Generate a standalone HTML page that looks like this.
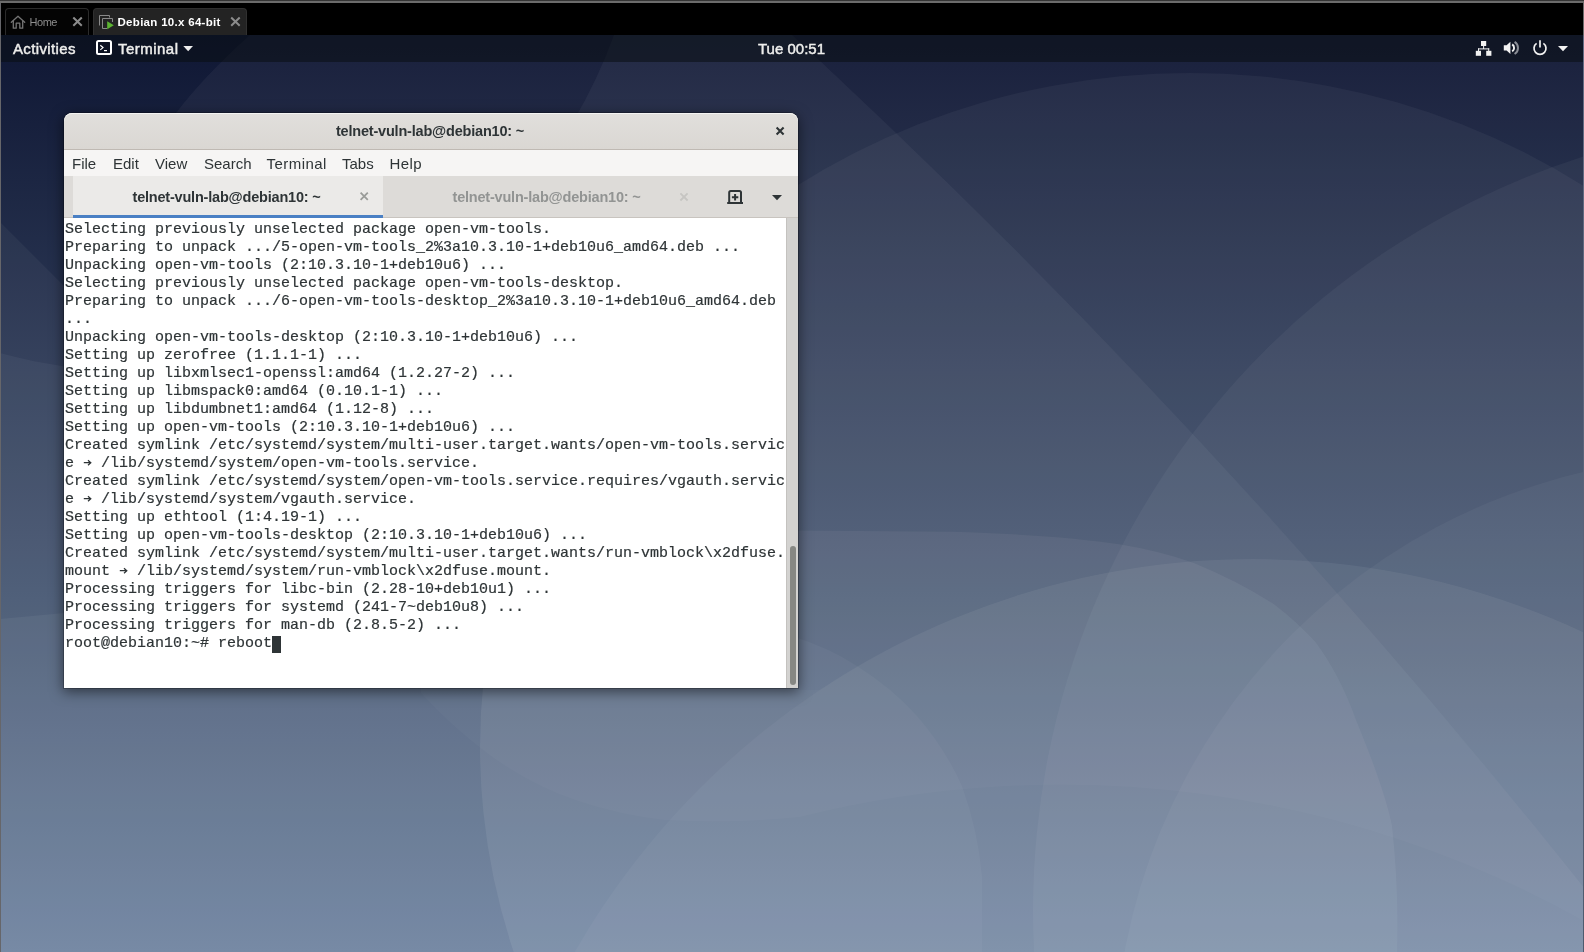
<!DOCTYPE html>
<html>
<head>
<meta charset="utf-8">
<title>Debian 10.x 64-bit</title>
<style>
*{box-sizing:border-box;margin:0;padding:0}
html,body{width:1584px;height:952px;overflow:hidden;background:#1c2541;font-family:"Liberation Sans",sans-serif}
#root{position:absolute;left:0;top:0;width:1584px;height:952px;overflow:hidden;will-change:transform}
#wall{position:absolute;left:0;top:0;width:1584px;height:952px}
/* vmware chrome */
#vmtop{position:absolute;left:0;top:0;width:1584px;height:35px;background:#000}
#vmline{position:absolute;left:0;top:0;width:1584px;height:3px;background:linear-gradient(#343434 0,#343434 30%,#6b6b6b 36%,#6b6b6b 92%,#333 100%)}
#vmleft{position:absolute;left:0;top:3px;width:1px;height:949px;background:#66666a}
#vmright{position:absolute;right:0;top:3px;width:1px;height:949px;background:linear-gradient(#6c6c6c 0,#6c6c6c 32px,#656d84 33px,#4d5a6e 100%)}
.vtab{position:absolute;top:8px;height:27px;border:1px solid #2b2b2b;border-bottom:none;border-radius:4px 4px 0 0;font-size:11px}
#vt1{left:5px;width:84px;background:#040404;color:#8e8e8e}
#vt2{left:93px;width:154px;background:#232323;color:#fff;font-weight:bold;border-color:#303030}
.vtab span{position:absolute;white-space:nowrap}
/* gnome bar */
#gbar{position:absolute;left:1px;top:35px;width:1582px;height:27px;background:rgba(10,14,18,.55);color:#eeeeec;font-weight:normal;-webkit-text-stroke:.45px #eeeeec;font-size:15px}
#gbar span{position:absolute;white-space:nowrap;line-height:27px;top:0}
#gbar>*{transform:translateX(1px)}
/* terminal window */
#win{position:absolute;left:64px;top:113px;width:734px;height:575px;border-radius:8px 8px 0 0;background:#fff;box-shadow:0 3px 13px 1px rgba(0,0,0,.5),0 0 0 1px rgba(0,0,0,.22);overflow:hidden}
#tbar{position:absolute;left:0;top:0;width:734px;height:37px;background:linear-gradient(#e1dfdc,#dad7d3);border-bottom:1px solid #bfb9b3;border-radius:8px 8px 0 0;box-shadow:inset 0 1px 0 #f4f4f2}
#tbar .t{position:absolute;left:-1px;width:734px;text-align:center;top:0;line-height:36px;font-weight:bold;font-size:14.5px;letter-spacing:-.2px;color:#2e3436}
#mbar{position:absolute;left:0;top:37px;width:734px;height:26px;background:#f6f5f4;font-size:15px;color:#2e3436}
#mbar span{position:absolute;top:0;line-height:27px;white-space:nowrap}
#tabs{position:absolute;left:0;top:63px;width:734px;height:42px;background:#dddbd8;border-bottom:1px solid #c8c4bf}
#tab1{position:absolute;left:9px;top:0;width:310px;height:42px;background:#ebeae8;border-bottom:3px solid #4a80c4}
#tabs .l{position:absolute;top:2px;line-height:39px;font-weight:bold;font-size:14.5px;letter-spacing:-.2px;white-space:nowrap}
#term{position:absolute;left:0;top:105px;width:722px;height:470px;background:#fff;color:#2e3436;font-family:"Liberation Mono",monospace;font-size:15px;line-height:18px;white-space:pre;padding:3px 0 0 1px;-webkit-text-stroke:.2px #2e3436}
#sb{position:absolute;left:722px;top:105px;width:12px;height:470px;background:#d3d2d0;border-left:1px solid #c4c2bf}
#sbt{position:absolute;left:3px;top:328px;width:6px;height:139px;border-radius:3px;background:#868783}
#cur{display:inline-block;width:9px;height:17px;background:#2e3436;vertical-align:top;margin-top:1px}
</style>
</head>
<body>
<div id="root">
<svg id="wall" width="1584" height="952" viewBox="0 0 1584 952">
<defs>
<linearGradient id="bg" x1="0" y1="0" x2="0" y2="952" gradientUnits="userSpaceOnUse">
<stop offset="0" stop-color="#0c1330"/>
<stop offset=".63" stop-color="#41526e"/>
<stop offset="1" stop-color="#647a99"/>
</linearGradient>
<clipPath id="cB"><ellipse cx="1190" cy="747" rx="710" ry="674"/></clipPath>
<clipPath id="cG"><path d="M400,600 L792,600 L792,636 Q830,648 857,666 Q892,688 917,716 Q945,748 962,786 Q978,830 982,876 L982,952 L400,952Z"/></clipPath>
<clipPath id="cH"><circle cx="1253" cy="1341" r="782"/><path d="M400,600 L798,600 L798,690 L850,690 L850,952 L400,952Z"/></clipPath>
</defs>
<rect width="1584" height="952" fill="url(#bg)"/>
<g fill="#fff">
<!-- level 0: everything except dark top-left corner -->
<path fill-rule="evenodd" fill-opacity=".045" d="M0,0H1584V952H0Z M0,0 L0,222 L64,286 Q110,200 176,113 Q205,75 250,35 L290,0Z"/>
<!-- A petal: big circle A minus Dk2 -->
<path fill-rule="evenodd" fill-opacity=".045" d="M-12114,5680a7686,7686 0 1,0 15372,0a7686,7686 0 1,0 -15372,0Z M-377,-140a511,511 0 1,0 1022,0a511,511 0 1,0 -1022,0Z"/>
<!-- S3/E -->
<path fill-opacity=".05" d="M0,619 L64,613 L798,530.5 L952,531.7 Q1060,535 1121,544.6 Q1160,551 1194,563 Q1240,582 1275,605 Q1297,622 1315,641.6 Q1340,675 1356,720 Q1385,790 1392,826 Q1399,890 1397,952 L0,952Z"/>
<ellipse cx="1190" cy="747" rx="710" ry="674" fill-opacity=".045"/>
<circle cx="1824" cy="910" r="791" fill-opacity=".045"/>
<circle cx="1722" cy="1064" r="608" fill-opacity=".04"/>
<circle cx="1253" cy="1341" r="782" fill-opacity=".04"/>
<g clip-path="url(#cB)"><rect x="400" y="600" width="600" height="352" fill-opacity=".035" clip-path="url(#cG)"/></g>
<!-- L -->
<path fill-opacity=".025" clip-path="url(#cH)" d="M421,693 Q450,725 487,753 Q530,785 578,801 Q620,815 664,820 Q730,824 800,817 A1072,1072 0 0,1 1584,921 L1584,500 L421,500Z"/>
</g>
</svg>

<div id="vmtop"></div>
<div id="vmline"></div>
<div id="vmleft"></div>
<div id="vmright"></div>
<div class="vtab" id="vt1"><span style="left:23.5px;top:7px;letter-spacing:-.45px">Home</span></div>
<div class="vtab" id="vt2"><span style="left:23.5px;top:7px;font-size:11.5px;letter-spacing:.3px">Debian 10.x 64-bit</span></div>
<svg style="position:absolute;left:0;top:0" width="260" height="36" viewBox="0 0 260 36">
<g fill="none" stroke="#757575" stroke-width="1.3" stroke-linejoin="round" stroke-linecap="round">
<path d="M11.3,22.3 L18,16.3 L24.7,22.3"/>
<path d="M13.3,21 V28.2 H16.2 V23.2 H19.8 V28.2 H22.7 V21"/>
</g>
<g stroke="#8c8c8c" stroke-width="2" stroke-linecap="butt">
<path d="M73.3,17.5 L81.8,25.8 M81.8,17.5 L73.3,25.8"/>
<path d="M231.2,17.5 L239.7,25.8 M239.7,17.5 L231.2,25.8"/>
</g>
<g fill="none" stroke="#8a8a8a" stroke-width="1">
<path d="M99.5,25.5 V15.5 H109.5 V17.5"/>
<path d="M107,28.5 H102.5 V18.5 H112.5 V22"/>
</g>
<path d="M107.2,21.3 L113.8,25.3 L107.2,29.3Z" fill="#5cb531"/>
</svg>

<div id="gbar">
<span style="left:11px;letter-spacing:.37px">Activities</span>
<span style="left:116px;letter-spacing:.47px">Terminal</span>
<span style="left:756px">Tue 00:51</span>
<svg style="position:absolute;left:0;top:0" width="1580" height="27" viewBox="2 35 1580 27">
<rect x="97" y="41" width="14" height="13" rx="1.5" fill="none" stroke="#fff" stroke-width="2"/>
<path d="M100.3,45.3 L103,47.6 L100.3,49.9" fill="none" stroke="#fff" stroke-width="1.2"/>
<rect x="104" y="50" width="3" height="1.2" fill="#fff"/>
<path d="M183.3,46 H193 L188.15,51.2Z" fill="#eee"/>
<g fill="#f2f2f2">
<rect x="1481" y="41" width="5.2" height="5"/>
<rect x="1475.8" y="50.8" width="5.2" height="5"/>
<rect x="1486.2" y="50.8" width="5.2" height="5"/>
<rect x="1483.1" y="46" width="1" height="3"/>
<rect x="1478" y="48.4" width="11.2" height="1"/>
<rect x="1478" y="48.4" width="1" height="2.6"/>
<rect x="1488.2" y="48.4" width="1" height="2.6"/>
<path d="M1503.8,45.2 H1506.6 L1510.4,41.8 V54 L1506.6,50.6 H1503.8Z"/>
<path d="M1558,46 H1568 L1563,51.2Z"/>
</g>
<path d="M1512.2,44.4 A4.2,4.2 0 0,1 1512.2,51.4" fill="none" stroke="#f2f2f2" stroke-width="1.9"/>
<path d="M1514.6,41.8 A7.2,7.2 0 0,1 1514.6,54" fill="none" stroke="#8b8e96" stroke-width="2"/>
<path d="M1536.6,43.4 A6,6 0 1,0 1543.4,43.4" fill="none" stroke="#f2f2f2" stroke-width="1.7"/>
<path d="M1540,40.2 V47.4" stroke="#f2f2f2" stroke-width="1.7"/>
</svg>
</div>

<div id="win">
<div id="tbar"><div class="t">telnet-vuln-lab@debian10: ~</div></div>
<div id="mbar">
<span style="left:8px">File</span><span style="left:49px">Edit</span><span style="left:91px">View</span><span style="left:140px">Search</span><span style="left:202.5px;letter-spacing:.45px">Terminal</span><span style="left:278px">Tabs</span><span style="left:325.5px;letter-spacing:.4px">Help</span>
</div>
<div id="tabs">
<div id="tab1"></div>
<span class="l" style="left:68.5px;color:#2e3436">telnet-vuln-lab@debian10: ~</span>
<span class="l" style="left:388.5px;color:#929493">telnet-vuln-lab@debian10: ~</span>
<svg style="position:absolute;left:0;top:-63px" width="734" height="110" viewBox="64 113 734 110">
<path d="M776.6,127.6 L783.6,134.4 M783.6,127.6 L776.6,134.4" stroke="#2e3436" stroke-width="2.1"/>
<path d="M360.6,192.6 L367.8,199.8 M367.8,192.6 L360.6,199.8" stroke="#9a9c99" stroke-width="1.8"/>
<path d="M680.4,193.3 L687.6,200.5 M687.6,193.3 L680.4,200.5" stroke="#c6c5c2" stroke-width="1.8"/>
<path d="M729.2,203 V192.6 Q729.2,191 730.8,191 H739.4 Q741,191 741,192.6 V203" fill="none" stroke="#2e3436" stroke-width="2"/>
<rect x="727.2" y="202" width="15.8" height="2" fill="#2e3436"/>
<path d="M735.1,194 V200.4 M731.9,197.2 H738.3" stroke="#2e3436" stroke-width="2"/>
<path d="M772,195 H782 L777,200.2Z" fill="#2e3436"/>
</svg>
</div>
<div id="term">Selecting previously unselected package open-vm-tools.
Preparing to unpack .../5-open-vm-tools_2%3a10.3.10-1+deb10u6_amd64.deb ...
Unpacking open-vm-tools (2:10.3.10-1+deb10u6) ...
Selecting previously unselected package open-vm-tools-desktop.
Preparing to unpack .../6-open-vm-tools-desktop_2%3a10.3.10-1+deb10u6_amd64.deb
...
Unpacking open-vm-tools-desktop (2:10.3.10-1+deb10u6) ...
Setting up zerofree (1.1.1-1) ...
Setting up libxmlsec1-openssl:amd64 (1.2.27-2) ...
Setting up libmspack0:amd64 (0.10.1-1) ...
Setting up libdumbnet1:amd64 (1.12-8) ...
Setting up open-vm-tools (2:10.3.10-1+deb10u6) ...
Created symlink /etc/systemd/system/multi-user.target.wants/open-vm-tools.servic
e <svg width="9" height="18" viewBox="0 0 9 18" style="vertical-align:top"><path d="M0.8,7.7 H7.4 M5,5.2 L7.8,7.7 L5,10.2" fill="none" stroke="#2e3436" stroke-width="1.25"/></svg> /lib/systemd/system/open-vm-tools.service.
Created symlink /etc/systemd/system/open-vm-tools.service.requires/vgauth.servic
e <svg width="9" height="18" viewBox="0 0 9 18" style="vertical-align:top"><path d="M0.8,7.7 H7.4 M5,5.2 L7.8,7.7 L5,10.2" fill="none" stroke="#2e3436" stroke-width="1.25"/></svg> /lib/systemd/system/vgauth.service.
Setting up ethtool (1:4.19-1) ...
Setting up open-vm-tools-desktop (2:10.3.10-1+deb10u6) ...
Created symlink /etc/systemd/system/multi-user.target.wants/run-vmblock\x2dfuse.
mount <svg width="9" height="18" viewBox="0 0 9 18" style="vertical-align:top"><path d="M0.8,7.7 H7.4 M5,5.2 L7.8,7.7 L5,10.2" fill="none" stroke="#2e3436" stroke-width="1.25"/></svg> /lib/systemd/system/run-vmblock\x2dfuse.mount.
Processing triggers for libc-bin (2.28-10+deb10u1) ...
Processing triggers for systemd (241-7~deb10u8) ...
Processing triggers for man-db (2.8.5-2) ...
root@debian10:~# reboot<span id="cur"></span></div>
<div id="sb"><div id="sbt"></div></div>
</div>
</div>
</body>
</html>
